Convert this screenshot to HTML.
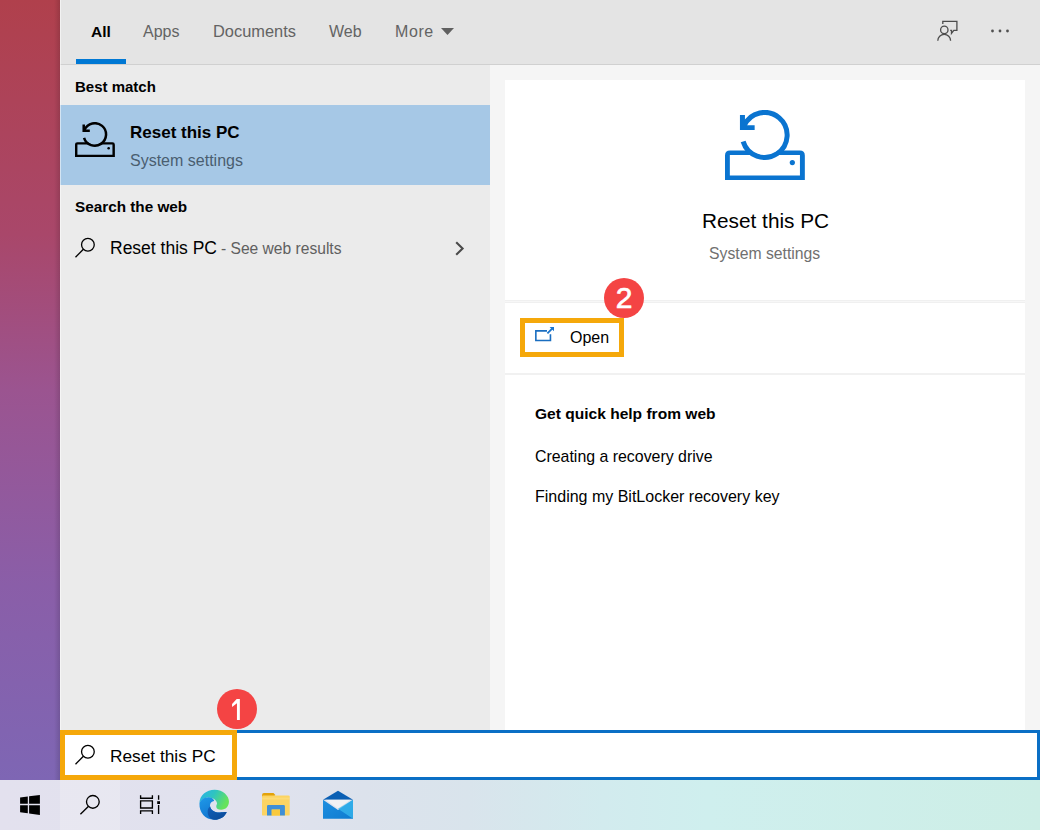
<!DOCTYPE html>
<html><head><meta charset="utf-8">
<style>
*{margin:0;padding:0;box-sizing:border-box}
html,body{width:1040px;height:830px;overflow:hidden;background:#e4e4e4}
body{position:relative;font-family:"Liberation Sans",sans-serif;color:#000}
.abs{position:absolute}
.t{position:absolute;white-space:nowrap;line-height:1}
#wall{left:0;top:0;width:60px;height:780px;background:linear-gradient(180deg,#b0404c 0%,#a9476a 30%,#9b5490 50%,#8a5ea8 75%,#7e66b4 100%)}
#header{left:60px;top:0;width:980px;height:64px;background:#e4e4e4}
#hborder{left:60px;top:64px;width:980px;height:1px;background:#d0d0d0}
#left{left:60px;top:65px;width:430px;height:665px;background:#ebebeb}
#right{left:490px;top:65px;width:550px;height:665px;background:#f5f5f5}
#hl{left:60px;top:105px;width:430px;height:80px;background:#a6c8e6}
.card{position:absolute;left:505px;width:520px;background:#fff}
#sbox{left:60px;top:730px;width:980px;height:50px;background:#fff;border:3px solid #0b6fc5}
#task{left:0;top:780px;width:1040px;height:50px;background:linear-gradient(90deg,#e3e1ee 0%,#e0e2ee 25%,#dce2ec 35%,#d9e4ec 45%,#d2ebee 58%,#cfefee 68%,#cdeee6 100%)}
.badge{position:absolute;width:40px;height:40px;border-radius:50%;background:#f44444;color:#fff;font-size:30px;text-align:center;line-height:40px;-webkit-text-stroke:.7px #fff}
.obox{position:absolute;border:5px solid #f5a80a}
</style></head><body>
<div id="wall" class="abs"></div>
<div class="abs" style="left:54px;top:0;width:6px;height:780px;background:linear-gradient(90deg,rgba(0,0,0,0),rgba(0,0,0,.13))"></div>
<div id="header" class="abs"></div>
<div id="hborder" class="abs"></div>
<div id="left" class="abs"></div>
<div id="right" class="abs"></div>
<div id="hl" class="abs"></div>
<div class="abs" style="left:60px;top:0;width:1px;height:730px;background:rgba(255,255,255,.5)"></div>

<!-- tabs -->
<div class="t" style="left:91px;top:24px;font-size:15.5px;font-weight:bold">All</div>
<div class="abs" style="left:76px;top:59px;width:50px;height:5px;background:#0078d4"></div>
<div class="t" style="left:143px;top:24px;font-size:16px;color:#636363">Apps</div>
<div class="t" style="left:213px;top:23px;font-size:16.4px;color:#636363">Documents</div>
<div class="t" style="left:329px;top:24px;font-size:16px;color:#636363">Web</div>
<div class="t" style="left:395px;top:24px;font-size:16px;letter-spacing:.6px;color:#636363">More</div>
<svg class="abs" style="left:441px;top:28px" width="13" height="7" viewBox="0 0 13 7"><path d="M0 0H13L6.5 7Z" fill="#606060"/></svg>

<!-- header icons -->
<svg class="abs" style="left:935px;top:18px" width="26" height="26" viewBox="0 0 26 26" fill="none" stroke="#4c4c4c" stroke-width="1.3">
<path d="M7.8 5.9V3.4H21.9V12.45H18.8L16.5 15.4V12.45H15.2"/>
<circle cx="9.3" cy="11.9" r="3.7"/>
<path d="M2.8 22.8A6.4 6.4 0 0 1 15.6 22.8"/>
</svg>
<svg class="abs" style="left:988px;top:27px" width="24" height="8" viewBox="0 0 24 8"><circle cx="4.5" cy="4" r="1.4" fill="#505050"/><circle cx="12" cy="4" r="1.4" fill="#505050"/><circle cx="19.5" cy="4" r="1.4" fill="#505050"/></svg>

<!-- left panel -->
<div class="t" style="left:75px;top:79px;font-size:15px;font-weight:bold">Best match</div>
<svg class="abs" style="left:75.2px;top:122.1px" width="39.9" height="35.05" viewBox="725.15 109.8 79.85 70.1" fill="#000" ><mask id="mk1"><rect x="700" y="100" width="120" height="90" fill="#fff"/><circle cx="764.8" cy="134.75" r="20.5" fill="#000"/></mask><path mask="url(#mk1)" fill-rule="evenodd" d="M725.15 179.9V155.3Q725.15 150.3 730.15 150.3H800Q805 150.3 805 155.3V179.9ZM730 154.75V175.25H800.1V154.75Z"/>
<path fill="none" stroke="#000" stroke-width="5" d="M743.28 141.33A22.5 22.5 0 1 0 744.25 125.60"/>
<path d="M740.1 114.9H745.1V125H754.8V129.8H740.1Z"/>
<circle cx="792.5" cy="162.4" r="2.6"/></svg>
<div class="t" style="left:130px;top:124px;font-size:17px;font-weight:bold">Reset this PC</div>
<div class="t" style="left:130px;top:153px;font-size:16px;color:#4a5e70">System settings</div>
<div class="t" style="left:75px;top:199px;font-size:15.3px;font-weight:bold">Search the web</div>
<svg class="abs" style="left:74px;top:237px" width="22" height="22" viewBox="0 0 22 22" fill="none" stroke="#000" stroke-width="1.3"><circle cx="13.9" cy="7.75" r="6.35"/><path d="M9.4 12.25L1.5 20.2"/></svg>
<div class="t" style="left:110px;top:240px;font-size:17.5px">Reset this PC</div>
<div class="t" style="left:221px;top:241px;font-size:15.6px;color:#606060">- See web results</div>
<svg class="abs" style="left:453px;top:240px" width="13" height="17" viewBox="0 0 13 17" fill="none" stroke="#4a4a4a" stroke-width="2.1"><path d="M3.2 2.2L9.6 8.5L3.2 14.8"/></svg>

<!-- right cards -->
<div class="card" style="top:80px;height:220px"></div>
<div class="abs" style="left:505px;top:300px;width:520px;height:3px;background:#f0f0f0"></div>
<div class="abs" style="left:505px;top:301px;width:520px;height:1px;background:#f7f7f7"></div>
<div class="card" style="top:303px;height:70px"></div>
<div class="abs" style="left:505px;top:373px;width:520px;height:2px;background:#f1f1f1"></div>
<div class="card" style="top:375px;height:355px"></div>

<svg class="abs" style="left:725.15px;top:109.8px" width="79.85" height="70.1" viewBox="725.15 109.8 79.85 70.1" fill="#0a74d0" ><mask id="mk2"><rect x="700" y="100" width="120" height="90" fill="#fff"/><circle cx="764.8" cy="134.75" r="20.5" fill="#000"/></mask><path mask="url(#mk2)" fill-rule="evenodd" d="M725.15 179.9V155.3Q725.15 150.3 730.15 150.3H800Q805 150.3 805 155.3V179.9ZM730 154.75V175.25H800.1V154.75Z"/>
<path fill="none" stroke="#0a74d0" stroke-width="5" d="M743.28 141.33A22.5 22.5 0 1 0 744.25 125.60"/>
<path d="M740.1 114.9H745.1V125H754.8V129.8H740.1Z"/>
<circle cx="792.5" cy="162.4" r="2.6"/></svg>
<div class="t" style="left:702px;top:211px;font-size:20.8px">Reset this PC</div>
<div class="t" style="left:709px;top:246px;font-size:15.75px;color:#707070">System settings</div>

<svg class="abs" style="left:530px;top:322px" width="30" height="24" viewBox="530 322 30 24">
<path fill="none" stroke="#1a6ec0" stroke-width="1.6" d="M547 330.85H535.85V340.45H550.45V334.3"/>
<path fill="none" stroke="#1a74cc" stroke-width="1.8" d="M547.4 333.3L552.4 328.3"/>
<path fill="#1a74cc" d="M549.6 326.9H554V331.3Z"/>
</svg>
<div class="t" style="left:570px;top:330px;font-size:16px">Open</div>

<div class="t" style="left:535px;top:406px;font-size:15.55px;font-weight:bold">Get quick help from web</div>
<div class="t" style="left:535px;top:449px;font-size:15.9px">Creating a recovery drive</div>
<div class="t" style="left:535px;top:489px;font-size:16px">Finding my BitLocker recovery key</div>

<!-- search box -->
<div id="sbox" class="abs"></div>
<svg class="abs" style="left:74px;top:744px" width="22" height="22" viewBox="0 0 22 22" fill="none" stroke="#000" stroke-width="1.3"><circle cx="13.9" cy="7.75" r="6.35"/><path d="M9.4 12.25L1.5 20.2"/></svg>
<div class="t" style="left:110px;top:748px;font-size:17.3px">Reset this PC</div>

<!-- taskbar -->
<div id="task" class="abs"></div>
<div class="abs" style="left:60px;top:780px;width:60px;height:50px;background:rgba(255,255,255,.22)"></div>
<svg class="abs" style="left:0;top:780px" width="370" height="50" viewBox="0 780 370 50">
<path fill="#000" d="M20.1 797.5L27.8 796.4V803.7H20.1ZM29.1 796.2L39.9 795V803.7H29.1ZM20.1 805.2H27.8V813.2L20.1 812.3ZM29.1 805.2H39.9V815L29.1 813.6Z"/>
<g fill="none" stroke="#000" stroke-width="1.35">
<circle cx="92.85" cy="801.85" r="6.35"/>
<path d="M88.3 806.4L80.4 814.3"/>
<path d="M140.6 795.2V798.2H152.4V795.2M140.6 800.9H152.4V808H140.6ZM140.6 814V810.9H152.4V814M158.6 795.2V799.8M158.6 805V814"/>
</g>
<rect x="157.2" y="801.2" width="2.8" height="2.8" fill="#000"/>
<defs>
<linearGradient id="eg1" x1="0" y1="0" x2="1" y2="0.4"><stop offset="0" stop-color="#29b0ea"/><stop offset="0.5" stop-color="#2fc4c0"/><stop offset="1" stop-color="#66e35c"/></linearGradient>
<linearGradient id="eg2" x1="0" y1="0" x2="0.6" y2="1"><stop offset="0" stop-color="#1f9ae8"/><stop offset="1" stop-color="#106fcc"/></linearGradient>
<linearGradient id="eg3" x1="0" y1="0" x2="1" y2="1"><stop offset="0" stop-color="#1060ba"/><stop offset="1" stop-color="#0b4894"/></linearGradient>
<linearGradient id="mg1" x1="0" y1="0" x2="1" y2="1"><stop offset="0" stop-color="#1e8fe0"/><stop offset="1" stop-color="#0f7bd0"/></linearGradient>
</defs>
<!-- edge -->
<g transform="translate(197 788) scale(0.040967)">
<path fill="url(#eg1)" d="M60 380C60 180 230 45 430 45C640 45 780 200 780 330C780 450 700 530 590 530C520 530 470 500 470 450C470 420 490 400 490 380C490 300 380 230 290 230C180 230 80 290 60 380Z"/>
<path fill="url(#eg2)" d="M60 380C80 290 180 220 290 225C380 230 420 290 420 320C340 330 310 400 320 450C340 560 460 600 560 595C640 590 700 580 725 590C680 700 560 775 420 775C200 775 50 600 60 380Z"/>
<path fill="url(#eg3)" d="M320 450C340 560 460 600 560 595C640 590 700 580 725 590C680 700 560 775 420 775C330 775 270 700 260 600C255 530 280 470 320 450Z"/>
</g>
<!-- folder -->
<path fill="#e3a20a" d="M262 795.2Q262 793 264 793H273.5L275.4 795L273.5 797H262Z"/>
<rect x="262" y="795.4" width="27.7" height="20.2" rx="1.2" fill="#fcd462"/>
<path fill="#fde7a0" d="M262 797.6H289.7V799.5H262Z" opacity=".35"/>
<path fill="#3f8fd6" d="M267 815.6V806.2Q267 805 268.2 805H283.7Q284.9 805 284.9 806.2V815.6H280V809.6H271.7V815.6Z"/>
<rect x="271.7" y="809.6" width="8.3" height="6" fill="#f8c93e"/>
<!-- mail -->
<path fill="#0a5fb4" d="M323 799.8L338 790.8L353 799.8Z"/>
<path fill="#f2f2f4" d="M325.5 799.8H350.5L338 808.6Z"/>
<path fill="url(#mg1)" d="M323 799.8L338 810L353 799.8V818.8H323Z"/>
<path fill="#38b8ee" d="M338 808.8L353 799.8V818.8Z" opacity=".75"/>
</svg>

<!-- annotations -->
<div class="obox" style="left:520px;top:318px;width:104px;height:39px"></div>
<div class="obox" style="left:60px;top:730px;width:177px;height:50px"></div>
<div class="badge" style="left:604px;top:278px">2</div>
<div class="badge" style="left:217px;top:689px"></div>
<svg class="abs" style="left:217px;top:689px" width="40" height="40" viewBox="217 689 40 40"><path fill="#fff" d="M236.7 698.9H239.85V720H236.95V703.2L232.06 706.9V703.9Z"/></svg>
</body></html>
